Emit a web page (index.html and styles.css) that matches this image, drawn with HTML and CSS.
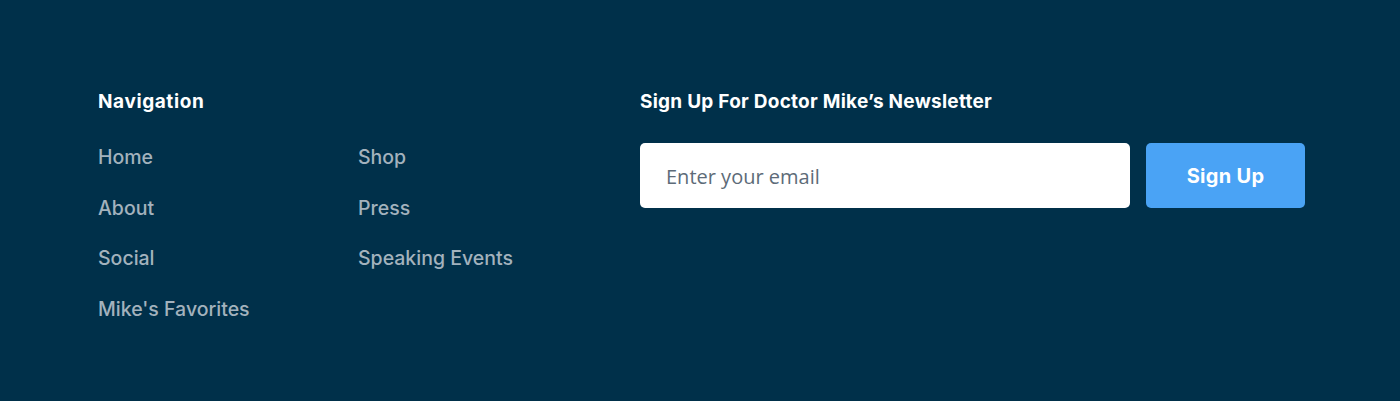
FILE: index.html
```html
<!DOCTYPE html>
<html>
<head>
<meta charset="utf-8">
<link rel="stylesheet" href="styles.css">
</head>
<body>
<footer class="footer">
  <div class="nav">
    <h3 class="title nav-title">Navigation</h3>
    <div class="nav-grid">
      <a class="link" href="#">Home</a>
      <a class="link" href="#">Shop</a>
      <a class="link" href="#">About</a>
      <a class="link" href="#">Press</a>
      <a class="link" href="#">Social</a>
      <a class="link" href="#">Speaking Events</a>
      <a class="link" href="#">Mike's Favorites</a>
    </div>
  </div>
  <div class="news">
    <h3 class="title">Sign Up For Doctor Mike’s Newsletter</h3>
    <form class="form">
      <input class="email" type="text" placeholder="Enter your email">
      <button class="btn" type="button">Sign Up</button>
    </form>
  </div>
</footer>
</body>
</html>
```
FILE: styles.css
```css
* { box-sizing: border-box; }
html, body { margin: 0; padding: 0; }
body {
  background: #00304a;
  font-family: Inter, "Open Sans", sans-serif;
  height: 401px;
  overflow: hidden;
}
.footer {
  display: flex;
  padding: 89px 0 0 98px;
}
.nav { width: 542px; }
.title {
  margin: 0;
  color: #ffffff;
  font-size: 19px;
  font-weight: 700;
  line-height: 26px;
  letter-spacing: 0.25px;
}
.nav-title { letter-spacing: 0.6px; }
.nav-grid {
  display: grid;
  grid-template-columns: 260px 200px;
  row-gap: 24.5px;
  margin-top: 29px;
}
.link {
  color: #a3b2bd;
  text-decoration: none;
  font-size: 19.5px;
  font-weight: 500;
  line-height: 26px;
}
.form {
  display: flex;
  gap: 16px;
  margin-top: 28px;
}
.email {
  width: 490px;
  height: 65px;
  border: none;
  border-radius: 5px;
  background: #fff;
  padding: 1px 26px 0;
  font-family: "Open Sans", sans-serif;
  font-size: 20px;
  color: #333;
  outline: none;
}
.email::placeholder { color: #5d6b78; }
.btn {
  width: 159px;
  height: 65px;
  border: none;
  border-radius: 5px;
  background: #4aa3f5;
  color: #fff;
  font-family: Inter, sans-serif;
  font-size: 20px;
  font-weight: 700;
  letter-spacing: 0.3px;
  padding-top: 2px;
}
```
